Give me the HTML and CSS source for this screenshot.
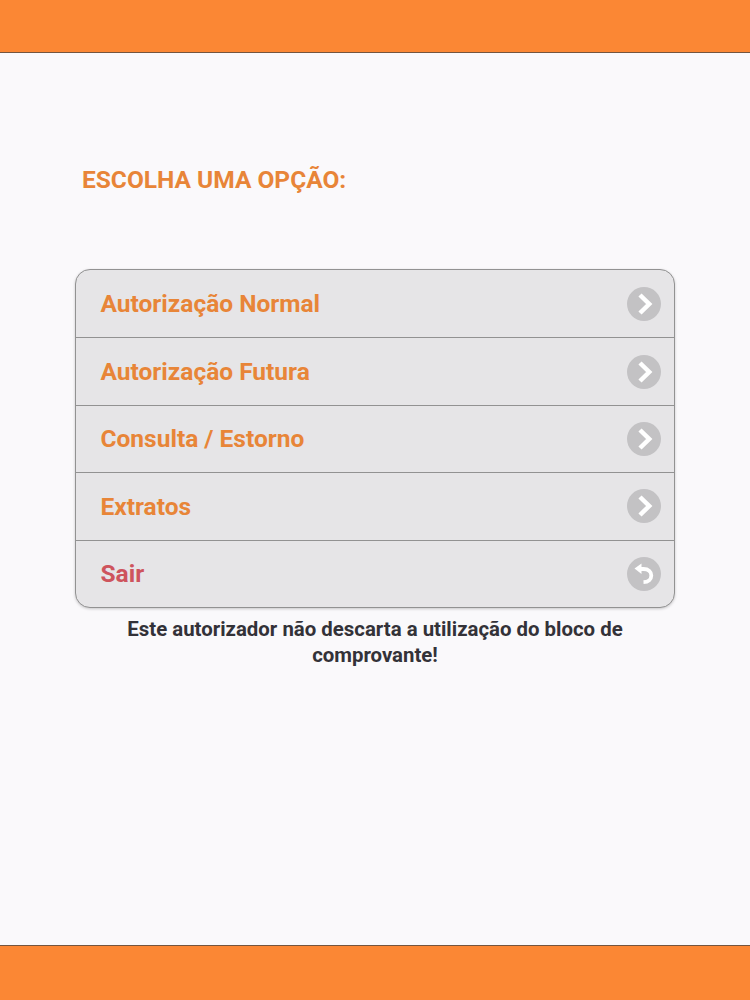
FILE: index.html
```html
<!DOCTYPE html>
<html lang="pt-BR">

<head>
    <meta charset="UTF-8">
    <meta name="viewport" content="width=device-width, initial-scale=1.0">
    <title>Autorizador</title>
    <link rel="stylesheet" href="styles.css">
</head>

<body>
    <div class="page">
        <header class="bar bar-header"></header>

        <main class="content">
            <h1 class="title">ESCOLHA UMA OPÇÃO:</h1>

            <ul class="menu">
                <li class="menu-item">
                    <span>Autorização Normal</span>
                    <svg class="icon" viewBox="0 0 34 34">
                        <circle cx="17" cy="17" r="17" />
                        <path d="M13 8l9.2 9-9.2 9" />
                    </svg>
                </li>
                <li class="menu-item">
                    <span>Autorização Futura</span>
                    <svg class="icon" viewBox="0 0 34 34">
                        <circle cx="17" cy="17" r="17" />
                        <path d="M13 8l9.2 9-9.2 9" />
                    </svg>
                </li>
                <li class="menu-item">
                    <span>Consulta / Estorno</span>
                    <svg class="icon" viewBox="0 0 34 34">
                        <circle cx="17" cy="17" r="17" />
                        <path d="M13 8l9.2 9-9.2 9" />
                    </svg>
                </li>
                <li class="menu-item">
                    <span>Extratos</span>
                    <svg class="icon" viewBox="0 0 34 34">
                        <circle cx="17" cy="17" r="17" />
                        <path d="M13 8l9.2 9-9.2 9" />
                    </svg>
                </li>
                <li class="menu-item menu-exit">
                    <span>Sair</span>
                    <svg class="icon icon-back" viewBox="0 0 34 34">
                        <circle cx="17" cy="17" r="17" />
                        <path d="M13 12h3.5c5 0 7.8 2.8 7.8 6.5c0 4-3 6.5-7.8 6.7" />
                        <polygon points="7.5,11.6 14.5,6.5 14.5,17" />
                    </svg>
                </li>
            </ul>

            <p class="notice">Este autorizador não descarta a utilização do bloco de comprovante!</p>
        </main>

        <footer class="bar bar-footer"></footer>
    </div>
</body>

</html>
```
FILE: styles.css
```css
:root {
    --orange: #fb8734;
    --text-orange: #e88538;
    --line: #929292;
}

* {
    margin: 0;
    padding: 0;
    box-sizing: border-box;
}

body {
    font-family: Roboto, "Liberation Sans", sans-serif;
    font-weight: 700;
    background-color: #faf9fb;
}

.page {
    display: flex;
    flex-direction: column;
    height: 1000px;
}

.bar {
    background-color: var(--orange);
}

.bar-header {
    height: 53px;
    border-bottom: 1px solid #74553f;
}

.bar-footer {
    height: 55px;
    border-top: 1px solid #74553f;
}

.content {
    flex: 1;
    padding: 111px 75px 0;
}

.title {
    padding-left: 7px;
    font-size: 24.5px;
    line-height: 32px;
    color: var(--text-orange);
}

.menu {
    margin-top: 73px;
    list-style: none;
    background-color: #e6e5e7;
    border: 1px solid var(--line);
    border-radius: 15px;
    box-shadow: 0 1px 3px rgba(0, 0, 0, 0.2);
}

.menu-item {
    display: flex;
    align-items: center;
    justify-content: space-between;
    height: 67.4px;
    padding: 0 13px 0 24.5px;
    font-size: 24.5px;
    color: var(--text-orange);
}

.menu-item + .menu-item {
    border-top: 1px solid var(--line);
}

.menu-exit {
    color: #ce545d;
}

.icon {
    width: 34px;
    height: 34px;
    fill: #c3c2c4;
}

.icon path {
    fill: none;
    stroke: #fff;
    stroke-width: 4.5;
}

.icon-back path {
    stroke-width: 3.8;
}

.icon polygon {
    fill: #fff;
}

.notice {
    margin-top: 8px;
    font-size: 20.4px;
    line-height: 26px;
    text-align: center;
    color: #333238;
}
```
